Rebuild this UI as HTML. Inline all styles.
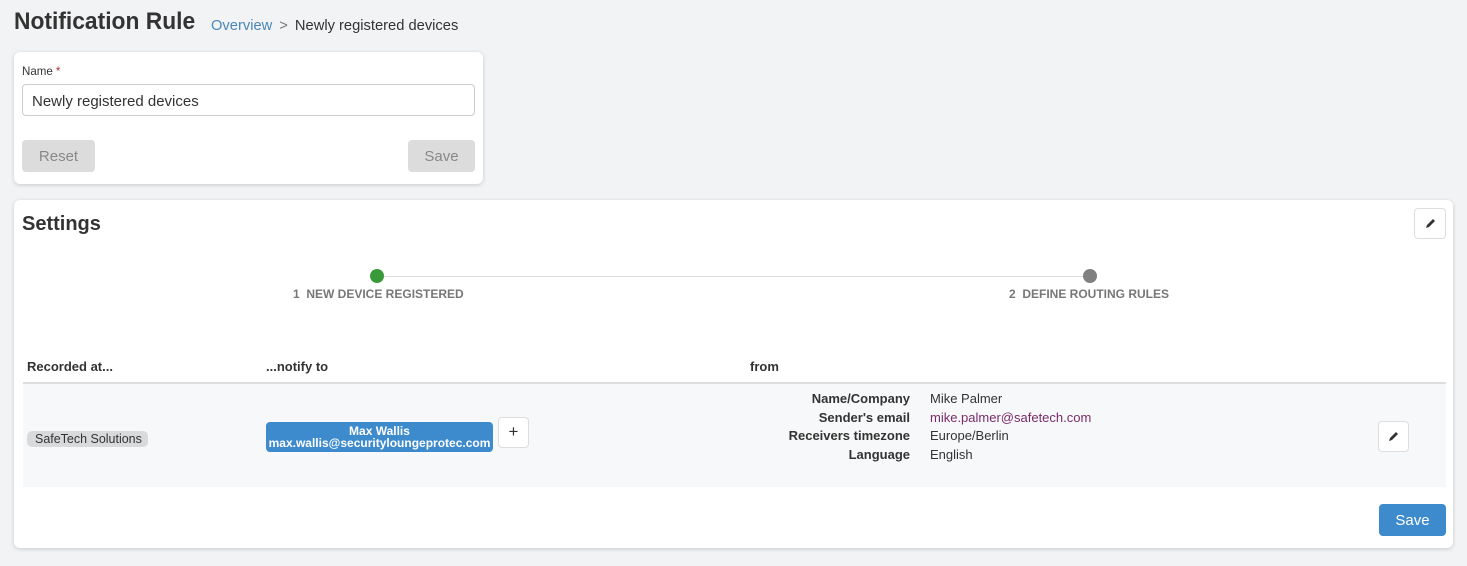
<!DOCTYPE html>
<html><head><meta charset="utf-8"><style>
*{box-sizing:border-box;margin:0;padding:0}
body{width:1467px;height:566px;background:#f2f3f5;font-family:"Liberation Sans",sans-serif;color:#333;position:relative;overflow:hidden}
.a{position:absolute;white-space:nowrap}
.card{position:absolute;background:#fff;border-radius:6px;box-shadow:0 1px 4px rgba(0,0,0,.18)}
.btn{position:absolute;border-radius:4px;text-align:center}
.cond{display:inline-block;transform:scaleX(.96);transform-origin:left center}
.pen{position:absolute;background:#fff;border:1px solid #ddd;border-radius:4px}
</style></head><body>
<div class="a" style="left:14px;top:8px;font-size:24px;font-weight:bold;color:#333"><span style="display:inline-block;transform:scaleX(.95);transform-origin:left center">Notification Rule</span></div>
<div class="a" style="left:211px;top:17px;font-size:15px;color:#333"><span style="display:inline-block;transform:scaleX(.98);transform-origin:left center"><span style="color:#4a86b8">Overview</span> <span style="color:#777;margin:0 3px">&gt;</span> Newly registered devices</span></div>

<div class="card" style="left:14px;top:52px;width:469px;height:132px"></div>
<div class="a" style="left:22px;top:64px;font-size:12px"><span class="cond">Name <span style="color:#a33">*</span></span></div>
<div class="a" style="left:22px;top:84px;width:453px;height:32px;border:1px solid #ccc;border-radius:4px;font-size:15px;padding:8px 9px">Newly registered devices</div>
<div class="btn" style="left:22px;top:140px;width:73px;height:32px;background:#dcdcdc;color:#888;font-size:15px;line-height:34px">Reset</div>
<div class="btn" style="left:408px;top:140px;width:67px;height:32px;background:#dcdcdc;color:#888;font-size:15px;line-height:34px">Save</div>

<div class="card" style="left:14px;top:200px;width:1439px;height:348px"></div>
<div class="a" style="left:22px;top:213px;font-size:20px;font-weight:bold">Settings</div>
<div class="pen" style="left:1414px;top:208px;width:32px;height:31px"><svg width="30" height="29" viewBox="0 0 30 29"><path d="M11 19l1-3 6-6 2 2-6 6z" fill="#333"/></svg></div>

<div class="a" style="left:377px;top:276px;width:713px;height:1px;background:#ddd"></div>
<div class="a" style="left:370px;top:269px;width:14px;height:14px;border-radius:50%;background:#3a9a3a"></div>
<div class="a" style="left:1083px;top:269px;width:14px;height:14px;border-radius:50%;background:#808080"></div>
<div class="a" style="left:293px;top:287px;font-size:12px;font-weight:bold;color:#777">1&nbsp;&nbsp;NEW DEVICE REGISTERED</div>
<div class="a" style="left:1009px;top:287px;font-size:12px;font-weight:bold;color:#777">2&nbsp;&nbsp;DEFINE ROUTING RULES</div>

<div class="a" style="left:27px;top:359px;font-size:13px;font-weight:bold">Recorded at...</div>
<div class="a" style="left:266px;top:359px;font-size:13px;font-weight:bold">...notify to</div>
<div class="a" style="left:750px;top:359px;font-size:13px;font-weight:bold">from</div>
<div class="a" style="left:23px;top:382px;width:1423px;height:2px;background:#ddd"></div>
<div class="a" style="left:23px;top:384px;width:1423px;height:103px;background:#f7f8f9"></div>

<div class="a" style="left:27px;top:431px;width:121px;height:16px;background:#d9dadc;border-radius:5px;font-size:13px;line-height:16px;padding-left:8px"><span class="cond">SafeTech Solutions</span></div>
<div class="a" style="left:266px;top:422px;width:227px;height:30px;background:#3d8bcd;border-radius:4px;color:#fff;font-size:12px;font-weight:bold;line-height:12px;text-align:center;padding-top:3px">Max Wallis<br>max.wallis@securityloungeprotec.com</div>
<div class="pen" style="left:498px;top:417px;width:31px;height:31px;font-size:17px;text-align:center;line-height:28px">+</div>

<div class="a" style="left:740px;top:390px;width:170px;text-align:right;font-size:13px;font-weight:bold;line-height:18.7px">Name/Company<br>Sender's email<br>Receivers timezone<br>Language</div>
<div class="a" style="left:930px;top:390px;font-size:13px;line-height:18.7px">Mike Palmer<br><span style="color:#7a2a6a">mike.palmer@safetech.com</span><br>Europe/Berlin<br>English</div>
<div class="pen" style="left:1378px;top:421px;width:31px;height:31px"><svg width="29" height="29" viewBox="0 0 29 29"><path d="M10 19l1-3 6-6 2 2-6 6z" fill="#333"/></svg></div>

<div class="btn" style="left:1379px;top:504px;width:67px;height:32px;background:#3d8bcd;color:#fff;font-size:15px;line-height:34px">Save</div>
</body></html>
